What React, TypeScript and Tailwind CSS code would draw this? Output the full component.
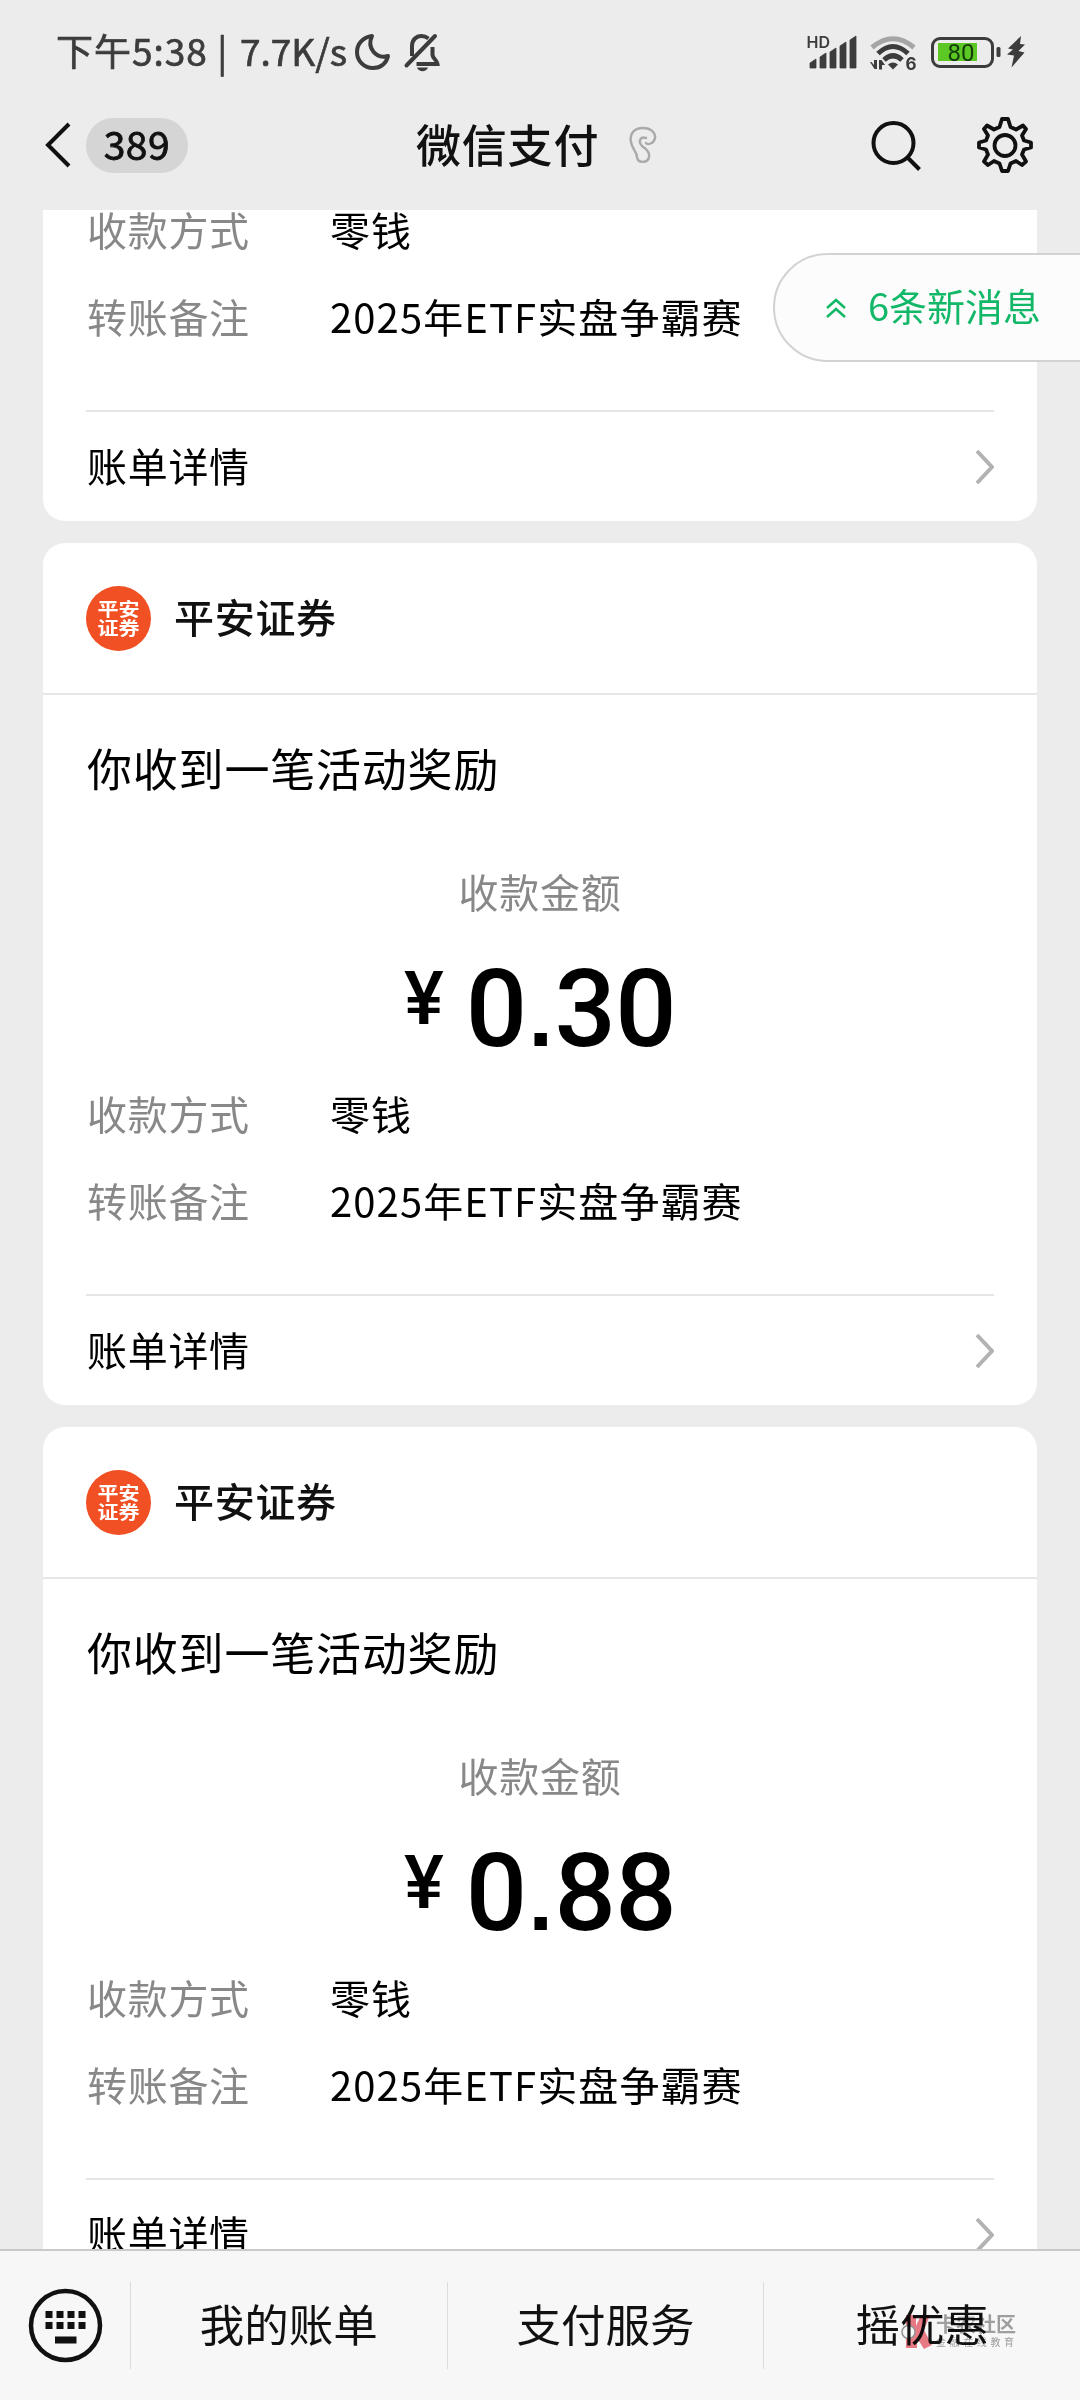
import React from "react";

interface PaymentCard {
  id: string;
  sender: string;
  title: string;
  amount: string;
  method: string;
  note: string;
}

const payments: PaymentCard[] = [
  {
    id: "first",
    sender: "平安证券",
    title: "你收到一笔活动奖励",
    amount: "0.30",
    method: "零钱",
    note: "2025年ETF实盘争霸赛",
  },
  {
    id: "second",
    sender: "平安证券",
    title: "你收到一笔活动奖励",
    amount: "0.88",
    method: "零钱",
    note: "2025年ETF实盘争霸赛",
  },
];

const menu = ["我的账单", "支付服务", "摇优惠"];

function StatusBar() {
  return (
    <div className="flex h-[102px] items-center justify-between pl-[56px] pr-[56px] text-[#3c3c3c]">
      <div className="flex items-center">
        <span className="w-[184px] whitespace-nowrap pb-0.5 text-[37px] leading-none tracking-[1px] [-webkit-text-stroke:0.7px_#3c3c3c]">
          下午5:38 |
        </span>
        <span className="w-[114px] whitespace-nowrap pb-0.5 text-[37px] leading-none [-webkit-text-stroke:0.7px_#3c3c3c]">
          7.7K/s
        </span>
        <svg width="38" height="40" viewBox="0 0 38 40" fill="none" stroke="currentColor" strokeWidth="4" strokeLinejoin="round">
          <path d="M18 5C9 6 3 13 3 21C3 30 10 37 19 37C27 37 32.500 32 34 25C22 28.500 12.500 17 18 5Z" />
        </svg>
        <svg className="ml-[11px]" width="38" height="41" viewBox="0 0 38 41" fill="none" stroke="currentColor" strokeWidth="4">
          <path d="M9 25V15C9 9 13 5 18.500 5C21 5 23.500 6 25.500 7.500M29.500 16V24C30 28 34 29 34.500 33H13.500" />
          <path d="M3.500 34.500L32 5" strokeLinecap="round" />
          <path d="M14 36.500H25C23 41.500 16 41.500 14 36.500Z" fill="currentColor" stroke="none" />
        </svg>
      </div>
      <svg width="218" height="40" viewBox="0 0 218 40" fill="currentColor" className="overflow-visible">
        <text x="0.500" y="17" fontSize="16" fontWeight="600" fontFamily="Inter, sans-serif">HD</text>
        <path d="M4 37V32L10 28V37ZM14 37V26L20 22V37ZM24 37V21L30 17V37ZM34 37V15L40 11V37ZM44 37V9L50 5V37Z" stroke="currentColor" strokeLinejoin="round" strokeWidth="0.800" />
        <g fill="none" strokeWidth="5">
          <path d="M66 16.500Q87 -1 108 16.500" stroke="#a5a5a5" />
          <path d="M72 22.500Q87 8.500 102 22.500" stroke="currentColor" />
          <path d="M78 29Q87 20.500 96 29" stroke="currentColor" />
        </g>
        <path d="M82 33.500Q87 29.500 92 33.500L87 38.500Z" />
        <path d="M64 31H65.500L68 34V29H71V38H68.500ZM73 29H75.500L79 34H76V38.500H73Z" />
        <text x="99.500" y="38.500" fontSize="17" fontWeight="700" fontFamily="Inter, sans-serif">6</text>
        <rect x="126.500" y="7.500" width="60" height="28" rx="7.500" fill="none" stroke="currentColor" strokeWidth="3" />
        <rect x="190.500" y="16" width="4" height="10" rx="1.500" />
        <rect x="132" y="12" width="39" height="18" fill="#5bc823" />
        <text x="141.500" y="30" fontSize="24" fill="#143c0a" fontFamily="Roboto, sans-serif">80</text>
        <path d="M215 5L202 17.500L207 18.500L201 23.500L208 24.500L205.500 36.500L218.500 21.500L212.500 20L219 13.500L214 13Z" />
      </svg>
    </div>
  );
}

function TitleBar() {
  return (
    <div className="flex h-[108px] items-center pb-[22px] text-[#111]">
      <div className="flex w-[416px] items-center pl-[45px]">
        <svg width="26" height="46" viewBox="0 0 26 46" fill="none" stroke="currentColor" strokeWidth="4">
          <path d="M24 2L3 23L24 44" />
        </svg>
        <span className="ml-[15px] flex h-[55px] w-[102px] items-center justify-center rounded-full bg-[#d5d5d5] pb-1 text-[39px] leading-none tracking-[0.6px] [-webkit-text-stroke:0.8px_#111]">
          389
        </span>
      </div>
      <h1 className="w-[213px] whitespace-nowrap pb-1 text-[45px] font-medium leading-none tracking-[0.8px]">微信支付</h1>
      <svg width="28" height="38" viewBox="0 0 28 38" fill="none" stroke="#aaa" strokeWidth="2.400" strokeLinecap="round">
        <path d="M17 12C11 10 9 16 13 20C17 23 21 26 20 31C19 37 9 38 8 31C8 26 3 23 2 16C0 7 6 2 14 2C22 2 27 7 26 12C25 18 18 19 17 17" />
      </svg>
      <svg className="ml-[213px]" width="52" height="52" viewBox="0 0 52 52" fill="none" stroke="currentColor" strokeWidth="4">
        <circle cx="23.500" cy="24" r="20" />
        <path d="M37.500 38.500L49.500 50.500" />
      </svg>
      <svg className="ml-[55px]" width="56" height="56" viewBox="0 0 56 56" fill="none" stroke="currentColor" strokeWidth="3.800" strokeLinejoin="round">
        <path d="M25 2H31L33.500 10L39 12.500L46 8.500L49 12L45 18.500L47 23.500L54 25.500V30.500L47 32.500L45 37.500L49 44.500L45 48L39 44L33.500 46.500L31 54H25L22.500 46.500L17 44L11 48L7 44.500L11 37.500L9 32.500L2 30.500V25.500L9 23.500L11 18.500L7 12L10 8.500L17 12.500L22.500 10Z" />
        <circle cx="28" cy="28.500" r="10.500" />
      </svg>
    </div>
  );
}

function DetailRow({ label, value }: { label: string; value: string }) {
  return (
    <div className="flex h-[87px] items-center whitespace-nowrap pb-1 text-[40px] leading-none">
      <span className="w-[243px] tracking-[0.7px] text-[#888]">{label}</span>
      <span className="tracking-[1.1px] text-black">{value}</span>
    </div>
  );
}

function BillLink() {
  return (
    <div className="mx-[43px] flex h-[111px] shrink-0 items-center justify-between border-t-2 border-[#e6e6e6] text-[40px] leading-none tracking-[0.7px] text-black">
      <span className="pb-1 pl-px">账单详情</span>
      <svg width="20" height="36" viewBox="0 0 20 36" fill="none" stroke="#b2b2b2" strokeWidth="4">
        <path d="M3 2L18 18L3 34" />
      </svg>
    </div>
  );
}

function Details({ method, note }: { method: string; note: string }) {
  return (
    <div className="shrink-0 px-[44px] pb-[49px]">
      <DetailRow label="收款方式" value={method} />
      <DetailRow label="转账备注" value={note} />
    </div>
  );
}

function Amount({ value }: { value: string }) {
  const [whole, cents] = value.split(".");
  return (
    <div className="flex h-[130px] items-start justify-center font-['Roboto','Noto_Sans_CJK_SC',sans-serif] font-medium leading-none text-black">
      <span className="mt-[20px] text-[75px] leading-none">¥</span>
      <span className="ml-[22px] mt-[14px] text-[108px] leading-none tracking-[-0.6px]">
        {whole}
        <span className="px-[2px] font-['Liberation_Sans'] text-[88px] font-bold">.</span>
        {cents}
      </span>
    </div>
  );
}

function Card({ payment }: { payment: PaymentCard }) {
  return (
    <section className="h-[862px] shrink-0 rounded-[22px] bg-white">
      <div className="flex h-[152px] items-center border-b-2 border-[#e6e6e6] px-[43px]">
        <div className="flex size-[65px] flex-col items-center justify-center rounded-full bg-[#f05023] text-[18.5px] font-bold leading-[19px] text-white">
          <span className="scale-x-[1.14]">平安</span>
          <span className="scale-x-[1.14]">证券</span>
        </div>
        <span className="ml-[23px] pb-1 text-[40px] font-medium leading-none tracking-[0.7px] text-[#111]">
          {payment.sender}
        </span>
      </div>
      <h2 className="flex h-[149px] items-center px-[44px] pb-1 text-[45px] leading-none tracking-[0.8px] text-black">
        {payment.title}
      </h2>
      <div className="flex h-[97px] items-center justify-center pb-1 text-[40px] leading-none tracking-[0.7px] text-[#888]">
        收款金额
      </div>
      <Amount value={payment.amount} />
      <Details method={payment.method} note={payment.note} />
      <BillLink />
    </section>
  );
}

function Watermark() {
  return (
    <div className="absolute left-[901px] top-[63px] flex opacity-60 mix-blend-multiply">
      <svg width="34" height="36" viewBox="0 0 34 36">
        <path d="M5 1H15V12L20 1H29L23 16L31 31L23 35L16 24V34H5Z" fill="#e5253a" />
        <circle cx="7.500" cy="18" r="6.500" fill="#fff" stroke="#555" strokeWidth="1.500" />
      </svg>
      <div className="ml-px flex flex-col whitespace-nowrap leading-none text-[#666]">
        <span className="text-[20px] font-bold leading-[20px]">卡农社区</span>
        <span className="mt-[2px] text-[10px] leading-[12px] tracking-[3.6px]">金融在线教育</span>
      </div>
    </div>
  );
}

function BottomBar() {
  return (
    <footer className="relative flex h-[151px] shrink-0 items-center border-t-2 border-[#c9c9c9] bg-[#f7f7f7] text-[#111]">
      <div className="flex w-[130px] shrink-0 items-center pl-[28px]">
        <svg width="75" height="75" viewBox="0 0 75 75" fill="currentColor">
          <circle cx="37.500" cy="37.500" r="34.500" fill="none" stroke="currentColor" strokeWidth="4.500" />
          <path d="M17.500 23h7v7h-7zM28.500 23h7v7h-7zM39.500 23h7v7h-7zM50.500 23h7v7h-7zM17.500 34h7v7h-7zM28.500 34h7v7h-7zM39.500 34h7v7h-7zM50.500 34h7v7h-7zM27 48.500h21.500v7H27z" />
        </svg>
      </div>
      {menu.map((item) => (
        <div
          key={item}
          className="flex h-[87px] flex-1 items-center justify-center border-l border-[#dcdcdc] pb-[5px] text-[44.5px] leading-none"
        >
          {item}
        </div>
      ))}
      <Watermark />
    </footer>
  );
}

export default function App() {
  return (
    <div className="relative flex h-[2400px] w-[1080px] flex-col overflow-hidden bg-[#ececec] font-['Noto_Sans_CJK_SC',sans-serif]">
      <header className="shrink-0">
        <StatusBar />
        <TitleBar />
      </header>

      <main className="flex min-h-0 flex-1 flex-col gap-[22px] overflow-hidden px-[43px]">
        <section className="flex h-[311px] shrink-0 flex-col justify-end overflow-hidden rounded-b-[22px] bg-white">
          <Details method="零钱" note="2025年ETF实盘争霸赛" />
          <BillLink />
        </section>
        {payments.map((payment) => (
          <Card key={payment.id} payment={payment} />
        ))}
      </main>

      <BottomBar />

      {/* Unread jump button */}
      <button className="absolute right-[-2px] top-[253px] flex h-[109px] w-[309px] items-center rounded-l-full border-2 border-[#d2d2d2] bg-[#fcfcfc] pl-[51px] text-[38px] leading-none text-[#12b868]">
        <svg width="20" height="20" viewBox="0 0 20 20" fill="none" stroke="currentColor" strokeWidth="2.600">
          <path d="M1 10L10 2L19 10M1 19L10 11L19 19" />
        </svg>
        <span className="ml-[22px] whitespace-nowrap pb-[5px]">6条新消息</span>
      </button>
    </div>
  );
}
